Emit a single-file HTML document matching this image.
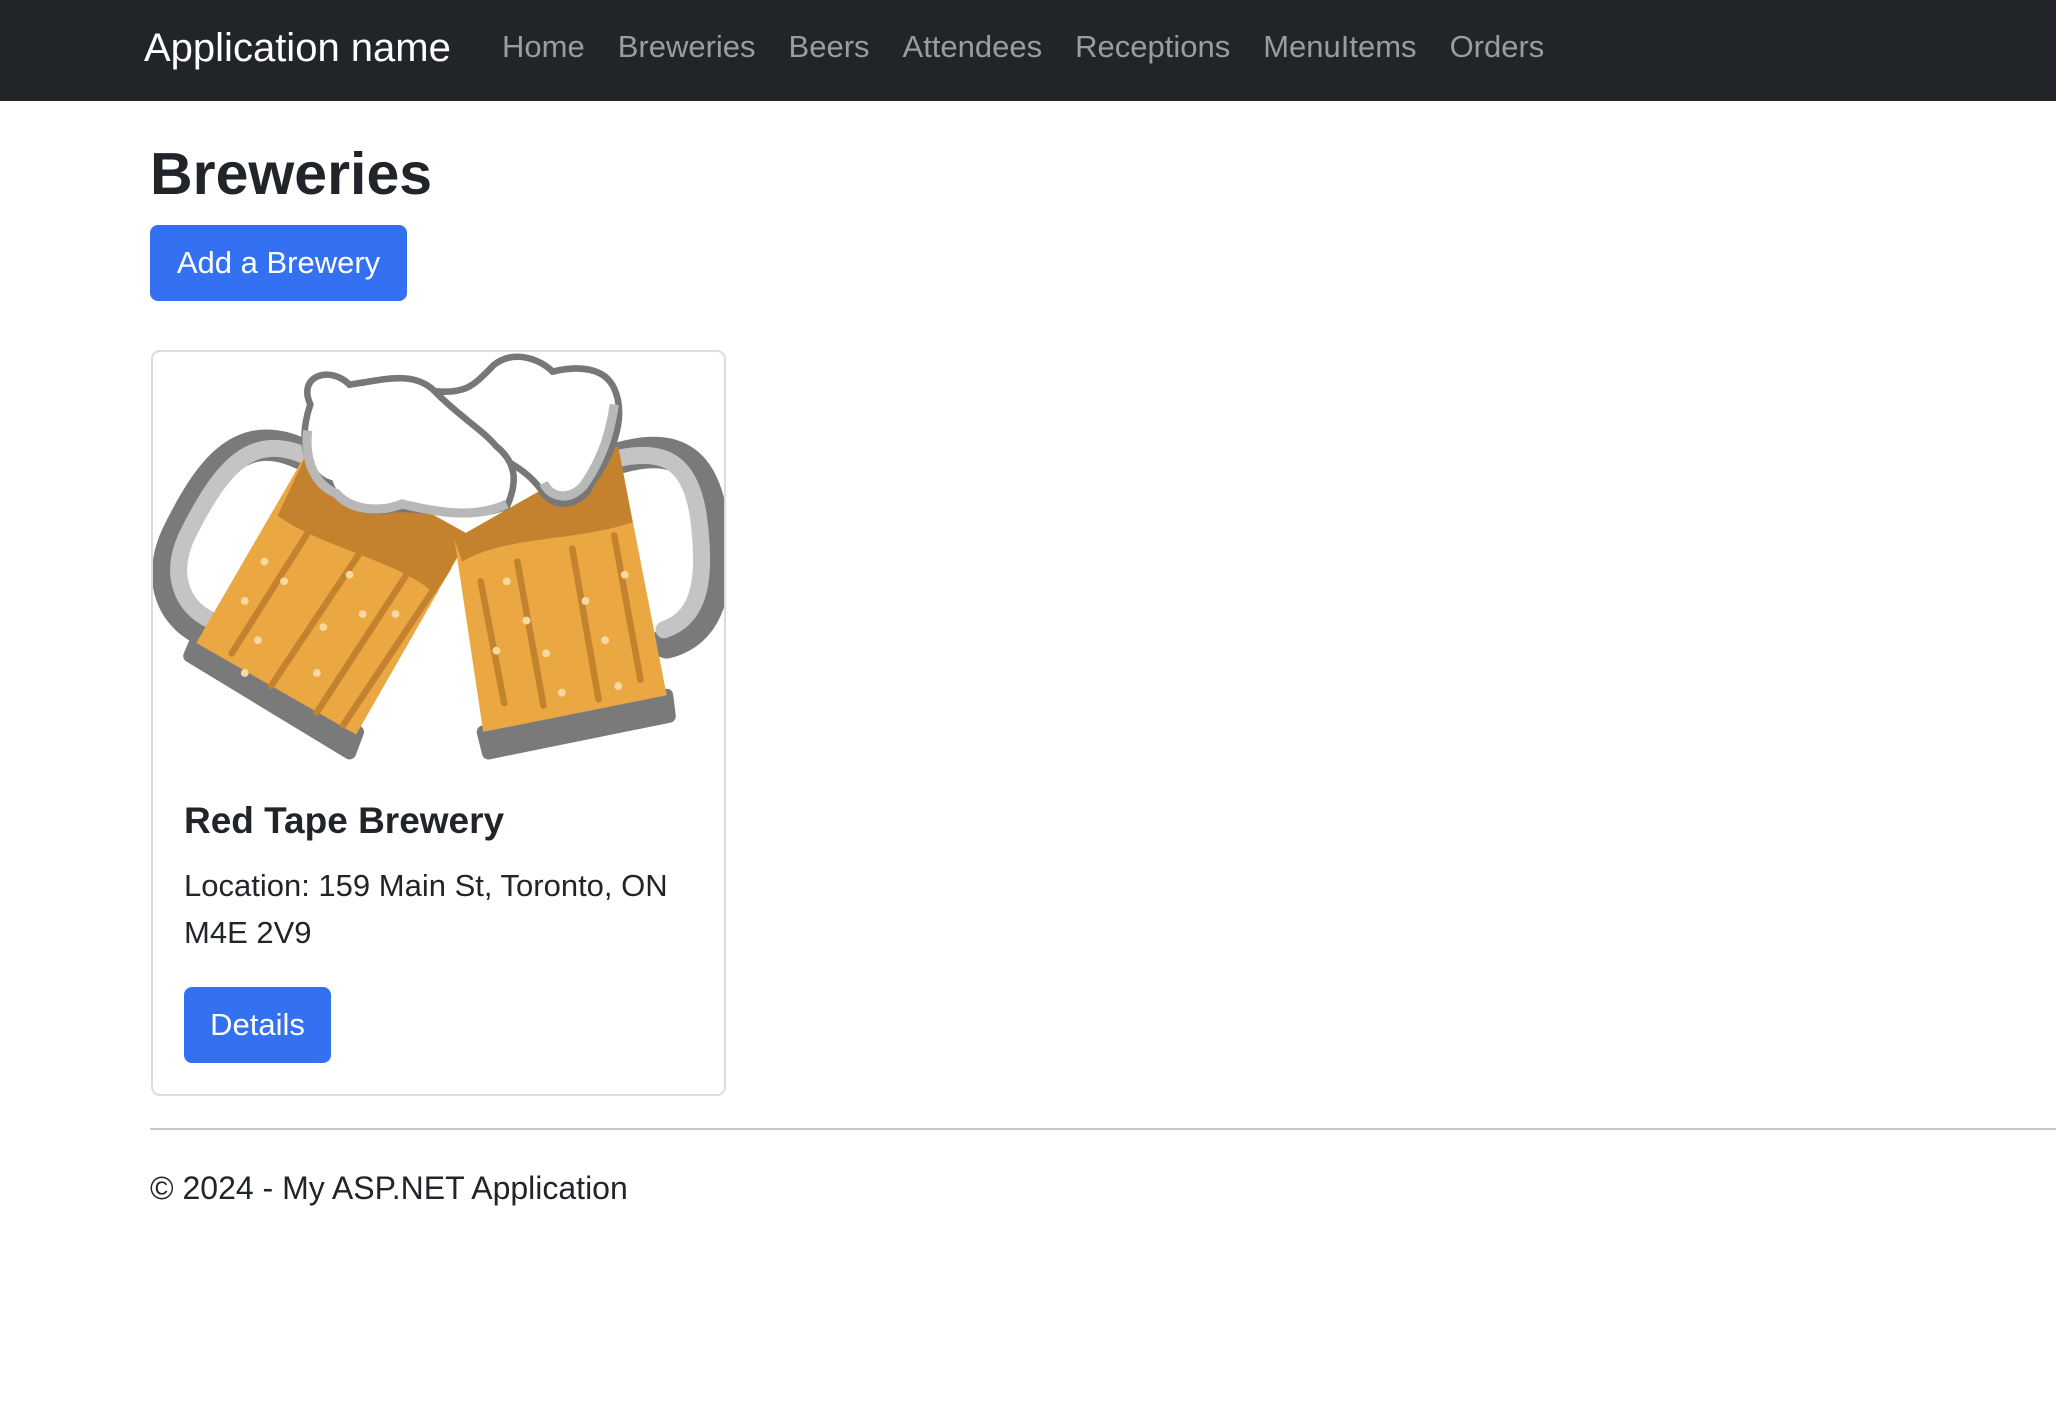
<!DOCTYPE html>
<html><head><meta charset="utf-8"><style>
*{box-sizing:border-box;margin:0;padding:0}
body{width:2056px;height:1428px;background:#fff;font-family:"Liberation Sans",sans-serif;color:#212529;position:relative;overflow:hidden}
.nav{position:absolute;left:0;top:0;width:2056px;height:101px;background:#212529}
.brand{position:absolute;left:144px;top:25px;font-size:40px;color:#fff;line-height:46px}
.links{position:absolute;left:502px;top:28px;font-size:31px;color:#9a9da0;line-height:38px;white-space:nowrap}
.links span{margin-right:33px}
h1{position:absolute;left:150px;top:138px;font-size:59px;font-weight:bold;line-height:72px}
.btn{position:absolute;background:#3371f2;color:#fff;border-radius:8px;font-size:31px;display:flex;align-items:center;justify-content:center}
.card{position:absolute;left:151px;top:350px;width:575px;height:746px;border:2px solid #dcdcdc;border-radius:9px;overflow:hidden}
.t{position:absolute;left:184px;top:798px;font-size:37px;font-weight:bold;line-height:46px}
.loc{position:absolute;left:184px;top:862px;font-size:31px;line-height:47px}
hr{position:absolute;left:150px;top:1128px;width:1906px;border:0;border-top:2px solid #c8c8c8}
.foot{position:absolute;left:150px;top:1168px;font-size:32px;line-height:40px}
</style></head><body>
<div class="nav"><div class="brand">Application name</div>
<div class="links"><span>Home</span><span>Breweries</span><span>Beers</span><span>Attendees</span><span>Receptions</span><span>MenuItems</span><span>Orders</span></div></div>
<h1>Breweries</h1>
<div class="btn" style="left:150px;top:225px;width:257px;height:76px">Add a Brewery</div>
<div class="card">
<svg width="574" height="414" viewBox="0 0 438 316" style="position:absolute;left:0;top:0">
<path d="M118,80 C70,55 45,85 18,140 C2,175 15,205 45,215" fill="none" stroke="#7a7a7a" stroke-width="24" stroke-linecap="round"/>
<path d="M118,80 C75,60 52,88 26,140 C12,170 22,195 45,205" fill="none" stroke="#c4c4c4" stroke-width="13" stroke-linecap="round"/>
<path d="M352,82 C398,68 418,82 426,122 C433,170 430,212 392,222" fill="none" stroke="#7a7a7a" stroke-width="24" stroke-linecap="round"/>
<path d="M352,82 C392,72 410,86 416,124 C422,168 420,202 390,212" fill="none" stroke="#c4c4c4" stroke-width="13" stroke-linecap="round"/>
<path d="M28,232 L150,306 L156,290 L34,218 Z" fill="#7a7a7a" stroke="#7a7a7a" stroke-width="10" stroke-linejoin="round"/>
<path d="M120,72 L242,140 L155,292 L33,222 Z" fill="#eba842"/>
<path d="M120,72 L242,140 L215,185 C190,160 130,150 95,125 Z" fill="#c4822e"/>
<g stroke="#c4822e" stroke-width="5" stroke-linecap="round"><line x1="120" y1="135" x2="60" y2="230"/><line x1="160" y1="150" x2="90" y2="255"/><line x1="200" y1="160" x2="125" y2="275"/><line x1="225" y1="165" x2="145" y2="285"/></g>
<path d="M252,290 L392,262 L394,278 L256,306 Z" fill="#7a7a7a" stroke="#7a7a7a" stroke-width="10" stroke-linejoin="round"/>
<path d="M230,143 L355,72 L392,262 L252,290 Z" fill="#eba842"/>
<path d="M230,143 L355,72 L366,130 C320,145 270,140 236,160 Z" fill="#c4822e"/>
<g stroke="#c4822e" stroke-width="5" stroke-linecap="round"><line x1="250" y1="175" x2="268" y2="268"/><line x1="278" y1="160" x2="298" y2="270"/><line x1="320" y1="150" x2="340" y2="265"/><line x1="352" y1="140" x2="372" y2="250"/></g>
<g fill="#f6d9a0"><circle cx="85" cy="160" r="3"/><circle cx="70" cy="190" r="3"/><circle cx="100" cy="175" r="3"/><circle cx="80" cy="220" r="3"/><circle cx="130" cy="210" r="3"/><circle cx="150" cy="170" r="3"/><circle cx="160" cy="200" r="3"/><circle cx="70" cy="245" r="3"/><circle cx="125" cy="245" r="3"/><circle cx="185" cy="200" r="3"/><circle cx="270" cy="175" r="3"/><circle cx="285" cy="205" r="3"/><circle cx="300" cy="230" r="3"/><circle cx="330" cy="190" r="3"/><circle cx="345" cy="220" r="3"/><circle cx="360" cy="170" r="3"/><circle cx="312" cy="260" r="3"/><circle cx="355" cy="255" r="3"/><circle cx="262" cy="228" r="3"/></g>
<path d="M215,30 C240,32 245,25 260,10 C275,-2 295,5 305,15 C325,10 345,12 352,28 C362,50 350,80 335,100 C328,118 305,122 296,105 C285,90 272,85 262,78 C250,65 230,55 215,30 Z" fill="#fff" stroke="#777" stroke-width="5"/>
<path d="M352,40 C348,70 338,88 330,100 C322,112 305,114 298,100" fill="none" stroke="#b8b8b8" stroke-width="7"/>
<path d="M120,40 C110,18 135,10 150,25 C180,20 200,15 215,30 C232,48 250,58 262,72 C278,85 278,100 270,118 C240,130 205,118 185,120 C160,125 140,115 135,100 C118,95 110,70 120,40 Z" fill="#fff" stroke="#777" stroke-width="5"/>
<path d="M118,60 C115,85 125,102 140,108 C152,122 175,122 190,116 C215,122 245,128 270,116" fill="none" stroke="#b8b8b8" stroke-width="7"/>
</svg>
</div>
<div class="t">Red Tape Brewery</div>
<div class="loc">Location: 159 Main St, Toronto, ON<br>M4E 2V9</div>
<div class="btn" style="left:184px;top:987px;width:147px;height:76px">Details</div>
<hr>
<div class="foot">© 2024 - My ASP.NET Application</div>
</body></html>
